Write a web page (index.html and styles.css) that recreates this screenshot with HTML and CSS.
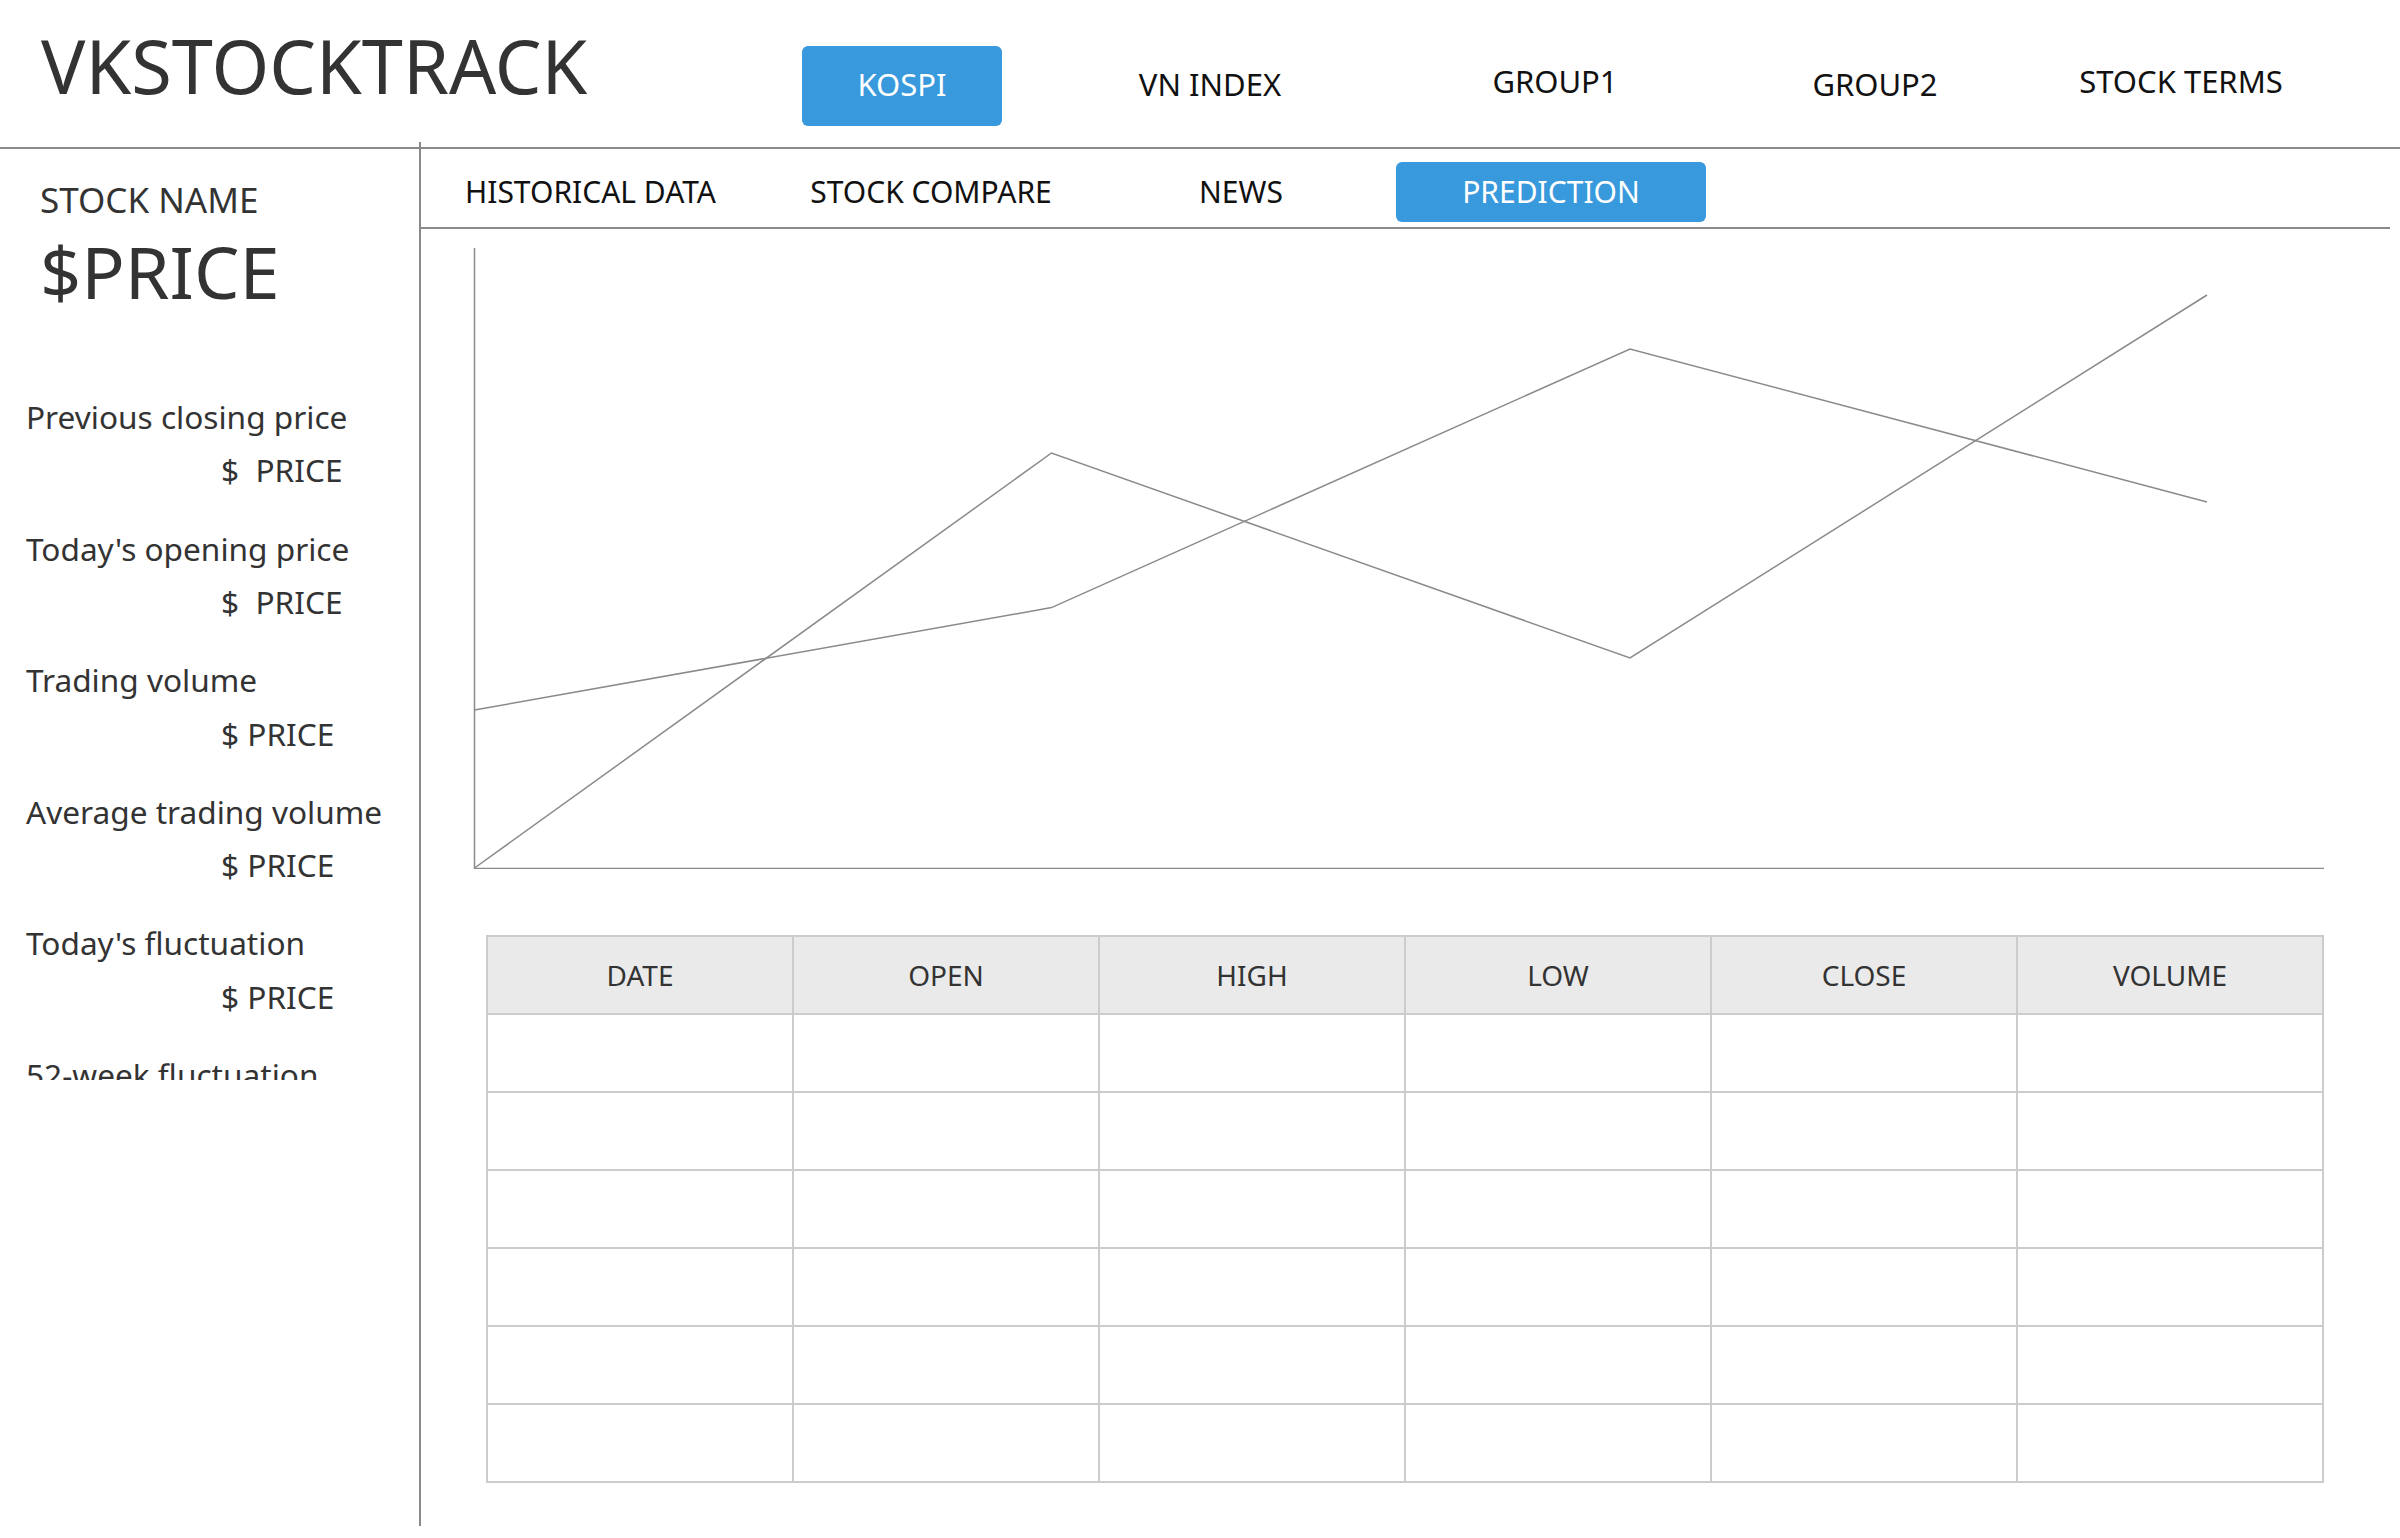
FILE: index.html
```html
<!DOCTYPE html>
<html lang="en">
<head>
<meta charset="utf-8">
<title>VKSTOCKTRACK</title>
<link rel="stylesheet" href="styles.css">
</head>
<body>
<header class="topbar">
  <div class="brand">VKSTOCKTRACK</div>
  <nav class="main-nav">
    <a class="nav-item nav-item--active">KOSPI</a>
    <a class="nav-item">VN INDEX</a>
    <a class="nav-item nav-item--raised">GROUP1</a>
    <a class="nav-item">GROUP2</a>
    <a class="nav-item nav-item--raised">STOCK TERMS</a>
  </nav>
</header>
<main class="layout">
  <aside class="sidebar">
    <div class="stock-name">STOCK NAME</div>
    <div class="stock-price">$PRICE</div>
    <div class="stats">
      <div class="stat">
        <div class="stat-label">Previous closing price</div>
        <div class="stat-value">$&nbsp; PRICE</div>
      </div>
      <div class="stat">
        <div class="stat-label">Today's opening price</div>
        <div class="stat-value">$&nbsp; PRICE</div>
      </div>
      <div class="stat">
        <div class="stat-label">Trading volume</div>
        <div class="stat-value">$ PRICE</div>
      </div>
      <div class="stat">
        <div class="stat-label">Average trading volume</div>
        <div class="stat-value">$ PRICE</div>
      </div>
      <div class="stat">
        <div class="stat-label">Today's fluctuation</div>
        <div class="stat-value">$ PRICE</div>
      </div>
      <div class="stat">
        <div class="stat-label">52-week fluctuation</div>
        <div class="stat-value">$ PRICE</div>
      </div>
    </div>
  </aside>
  <section class="content">
    <nav class="sub-nav">
      <a class="sub-item sub-item--first">HISTORICAL DATA</a>
      <a class="sub-item">STOCK COMPARE</a>
      <a class="sub-item">NEWS</a>
      <a class="sub-item sub-item--active">PREDICTION</a>
    </nav>
    <svg class="chart" viewBox="0 0 1851 621" xmlns="http://www.w3.org/2000/svg">
      <line class="chart-axis" x1="1.5" y1="0" x2="1.5" y2="621"/>
      <line class="chart-axis" x1="1" y1="620.5" x2="1851" y2="620.5"/>
      <polyline class="chart-line" points="1.5,620 578.5,205 1157,410 1734,47"/>
      <polyline class="chart-line" points="1.5,462 578.5,359.6 1157,101 1734,254"/>
    </svg>
    <div class="data-table" role="table">
      <div class="cell cell--head" role="columnheader">DATE</div>
      <div class="cell cell--head" role="columnheader">OPEN</div>
      <div class="cell cell--head" role="columnheader">HIGH</div>
      <div class="cell cell--head" role="columnheader">LOW</div>
      <div class="cell cell--head" role="columnheader">CLOSE</div>
      <div class="cell cell--head" role="columnheader">VOLUME</div>
      <div class="cell"></div><div class="cell"></div><div class="cell"></div><div class="cell"></div><div class="cell"></div><div class="cell"></div>
      <div class="cell"></div><div class="cell"></div><div class="cell"></div><div class="cell"></div><div class="cell"></div><div class="cell"></div>
      <div class="cell"></div><div class="cell"></div><div class="cell"></div><div class="cell"></div><div class="cell"></div><div class="cell"></div>
      <div class="cell"></div><div class="cell"></div><div class="cell"></div><div class="cell"></div><div class="cell"></div><div class="cell"></div>
      <div class="cell"></div><div class="cell"></div><div class="cell"></div><div class="cell"></div><div class="cell"></div><div class="cell"></div>
      <div class="cell"></div><div class="cell"></div><div class="cell"></div><div class="cell"></div><div class="cell"></div><div class="cell"></div>
    </div>
  </section>
</main>
</body>
</html>
```
FILE: styles.css
```css
* { box-sizing: border-box; }

body {
  margin: 0;
  font-family: "Noto Sans", "Open Sans", sans-serif;
  color: #333;
  background: #fff;
}

a { text-decoration: none; cursor: pointer; }

/* ---------- top bar ---------- */
.topbar {
  display: grid;
  grid-template-columns: 802px auto;
  height: 149px;
  border-bottom: 2px solid #8a8a8a;
}

.brand {
  padding: 29px 0 0 41px;
  font-size: 74px;
  line-height: 1;
  color: #333;
  white-space: nowrap;
}

.main-nav {
  display: grid;
  grid-template-columns: 200px 416px 274px 366px 246px;
  margin-top: 46px;
  height: 80px;
  align-items: center;
}

.nav-item {
  font-size: 31px;
  line-height: 1;
  color: #111;
  text-align: center;
  padding-bottom: 4px;
  white-space: nowrap;
}

.nav-item--raised { padding-bottom: 10px; }

.nav-item--active {
  height: 80px;
  display: flex;
  align-items: center;
  justify-content: center;
  background: #3899dc;
  color: #fff;
  border-radius: 6px;
}

/* ---------- layout ---------- */
.layout {
  display: flex;
  margin-top: -7px;
  height: 1384px;
}

.sidebar {
  flex: none;
  width: 421px;
  border-right: 2px solid #8a8a8a;
  padding-top: 40px;
}

.stock-name {
  padding-left: 40px;
  font-size: 35px;
  line-height: 1;
}

.stock-price {
  margin-top: 18px;
  padding-left: 40px;
  font-size: 72px;
  line-height: 1;
}

.stats {
  height: 773px;
  overflow: hidden;
  padding: 94px 0 0 26px;
}

.stat { margin-bottom: 46.5px; }

.stat-label {
  font-size: 31.6px;
  line-height: 1;
  white-space: nowrap;
}

.stat-value {
  margin-top: 21.9px;
  padding-left: 195px;
  font-size: 31.6px;
  line-height: 1;
}

/* ---------- content ---------- */
.content {
  flex: 1;
  min-width: 0;
  margin-right: 10px;
}

.sub-nav {
  display: grid;
  grid-template-columns: 311px 310px 310px 310px;
  align-items: center;
  height: 87px;
  padding: 20px 0 5px 44px;
  border-bottom: 2px solid #8a8a8a;
}

.sub-item {
  font-size: 30px;
  line-height: 1;
  color: #111;
  text-align: center;
  white-space: nowrap;
}

.sub-item--first { text-align: left; }

.sub-item--active {
  height: 60px;
  display: flex;
  align-items: center;
  justify-content: center;
  background: #3899dc;
  color: #fff;
  border-radius: 6px;
}

.chart {
  display: block;
  margin: 19px 0 0 52px;
  width: 1851px;
  height: 621px;
}

.chart-axis {
  stroke: #8a8a8a;
  stroke-width: 1.5;
}

.chart-line {
  fill: none;
  stroke: #8a8a8a;
  stroke-width: 1.5;
}

.data-table {
  display: grid;
  grid-template-columns: repeat(6, 306px);
  width: 1838px;
  margin: 66px 0 0 65px;
  border-top: 2px solid #cccccc;
  border-left: 2px solid #cccccc;
}

.cell {
  height: 78px;
  border-right: 2px solid #cccccc;
  border-bottom: 2px solid #cccccc;
}

.cell--head {
  display: flex;
  align-items: center;
  justify-content: center;
  background: #eaeaea;
  font-size: 28px;
  color: #333;
}
```
